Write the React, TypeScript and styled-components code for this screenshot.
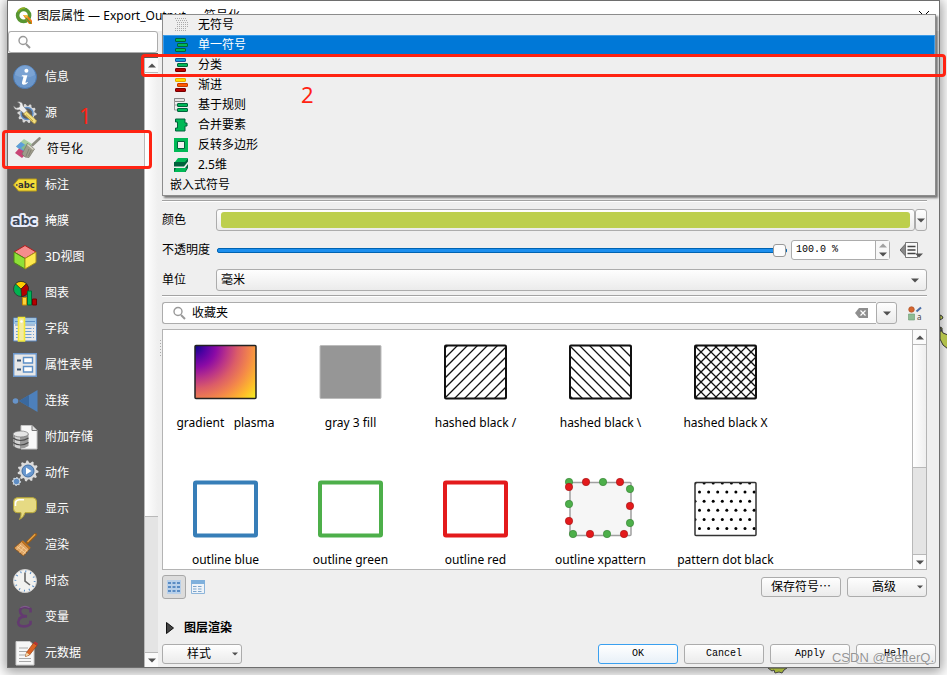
import React from "react";
import styled, { createGlobalStyle, css } from "styled-components";

const UI = `"Noto Sans", "Noto Sans CJK SC", sans-serif`;
const MONO = `"Liberation Mono", "Noto Sans CJK SC", monospace`;

const GlobalStyle = createGlobalStyle`
  * { box-sizing: border-box; }
  body { margin: 0; background: #fff; overflow: hidden; }
  button, input, select { font: inherit; color: inherit; margin: 0; }
  svg { display: block; flex: none; }
`;

const raised = css`
  border: 1px solid #acacac;
  border-radius: 3px;
  background: linear-gradient(#fefefe, #ebebeb);
`;

const Desktop = styled.div`
  position: relative;
  height: 100vh;
  padding: 0 7px 7px;
  overflow: hidden;
  font: 12px/20px ${UI};
  color: #000;
`;

const Dialog = styled.main`
  position: relative;
  display: flex;
  flex-direction: column;
  height: 100%;
  border: 1px solid #6e6e6e;
  background: #efefef;
  box-shadow: 0 2px 12px 2px rgba(0, 0, 0, 0.4);
`;

const TitleBar = styled.header`
  display: flex;
  align-items: center;
  gap: 4px;
  height: 30px;
  padding: 0 10px 0 7px;
  background: #fff;
`;

const Title = styled.h1`
  flex: 1;
  margin: 0;
  font-size: 12px;
  font-weight: 400;
`;

const CloseButton = styled.button`
  padding: 0;
  border: 0;
  background: none;
`;

const Body = styled.div`
  display: flex;
  flex: 1;
  gap: 4px;
  min-height: 0;
`;

const Sidebar = styled.aside`
  display: flex;
  flex-direction: column;
  width: 150px;
  min-height: 0;
`;

const SideSearch = styled.label`
  display: flex;
  align-items: center;
  flex: none;
  height: 22px;
  padding: 0 8px;
  gap: 6px;
  border: 1px solid #acacac;
  border-radius: 3px;
  background: #fff;
`;

const BareInput = styled.input`
  flex: 1;
  min-width: 0;
  padding: 0;
  border: 0;
  outline: 0;
  background: none;
`;

const SideBody = styled.div`
  display: flex;
  flex: 1;
  min-height: 0;
  background: #5c5c5c;
`;

const NavList = styled.nav`
  flex: 1;
  padding-top: 6px;
  overflow: hidden;
`;

const NavItem = styled.button<{ $active?: boolean }>`
  display: flex;
  align-items: center;
  gap: 8px;
  width: 100%;
  height: 36px;
  padding: 0 0 0 ${(p) => (p.$active ? 7 : 5)}px;
  border: 0;
  background: ${(p) => (p.$active ? "#efefef" : "transparent")};
  color: ${(p) => (p.$active ? "#000" : "#fff")};
  text-align: left;
`;

const Scroll = styled.div<{ $offset?: number }>`
  display: flex;
  flex-direction: column;
  flex: none;
  width: 14px;
  margin-top: ${(p) => p.$offset ?? 0}px;
  border-left: 1px solid #b8b8b8;
  background: #e4e4e4;
`;

const ScrollButton = styled.button`
  display: flex;
  align-items: center;
  justify-content: center;
  flex: none;
  height: 14px;
  padding: 0;
  border: 0;
  background: #fbfbfb;
`;

const ScrollThumb = styled.div<{ $size: number }>`
  flex: 0 0 ${(p) => p.$size}%;
  border: solid #b8b8b8;
  border-width: 1px 0;
  background: linear-gradient(90deg, #fff, #efefef);
`;

const ScrollGap = styled.div`
  flex: 1;
  border-bottom: 1px solid #b8b8b8;
`;

const Panel = styled.section`
  position: relative;
  display: flex;
  flex-direction: column;
  flex: 1;
  min-width: 0;
  padding: 0 3px 3px 0;
`;

const Upper = styled.div`
  display: flex;
  flex-direction: column;
  flex: 1;
  min-height: 0;
  margin-right: 9px;
`;

const LayerTree = styled.div`
  flex: none;
  height: 169px;
`;

const Rule = styled.hr`
  flex: none;
  width: 100%;
  height: 2px;
  margin: 0;
  border: 0;
  border-top: 1px solid #a3a3a3;
  background: #fff;
`;

const Form = styled.div`
  display: grid;
  grid-template-columns: 54px 1fr;
  row-gap: 8px;
  align-items: center;
  padding: 7px 0 4px;
`;

const FieldLabel = styled.label`
  white-space: nowrap;
`;

const Line = styled.div`
  display: flex;
  align-items: center;
  height: 22px;
  min-width: 0;
`;

const ColorButton = styled.button`
  ${raised}
  flex: 1;
  height: 22px;
  padding: 2px 4px;
`;

const Swatch = styled.span`
  display: block;
  height: 16px;
  border-radius: 3px;
  background: #bdcf4d;
`;

const ArrowButton = styled.button<{ $wide?: boolean }>`
  ${raised}
  display: flex;
  align-items: center;
  justify-content: center;
  width: ${(p) => (p.$wide ? 21 : 12)}px;
  height: 22px;
  padding: 0;
`;

const Slider = styled.input`
  flex: 1;
  min-width: 0;
  height: 14px;
  && { margin: 0 4px 0 1px; }
  appearance: none;
  background: none;
  &::-webkit-slider-runnable-track {
    height: 5px;
    border: 1px solid #0063b1;
    border-radius: 2px;
    background: #1c8fee;
  }
  &::-webkit-slider-thumb {
    appearance: none;
    width: 13px;
    height: 13px;
    margin-top: -5px;
    border: 1px solid #999;
    border-radius: 3px;
    background: #fcfcfc;
  }
`;

const Spin = styled.div`
  display: flex;
  width: 99px;
  height: 20px;
  padding-left: 4px;
  border: 1px solid #acacac;
  border-radius: 3px;
  background: #fff;
  font: 10px/18px ${MONO};
`;

const SpinArrows = styled.div`
  display: flex;
  flex-direction: column;
  width: 14px;
  border-left: 1px solid #acacac;
  background: #f7f7f7;
`;

const SpinArrow = styled.button`
  display: flex;
  align-items: center;
  justify-content: center;
  flex: 1;
  padding: 0;
  border: 0;
  background: none;
`;

const IconButton = styled.button`
  && { margin: 0 4px 0 10px; }
  padding: 0;
  border: 0;
  background: none;
`;

const SelectWrap = styled.div`
  ${raised}
  display: grid;
  align-items: center;
  height: 22px;
  > * { grid-area: 1 / 1; }
  > svg { justify-self: end; margin-right: 7px; pointer-events: none; }
`;

const Select = styled.select`
  width: 100%;
  height: 20px;
  padding: 0 4px;
  border: 0;
  outline: 0;
  appearance: none;
  background: none;
`;

const Search = styled.div`
  display: flex;
  align-items: center;
  flex: 1;
  height: 22px;
  gap: 6px;
  padding: 0 8px 0 9px;
  border: 1px solid #acacac;
  border-right: 0;
  border-radius: 3px 0 0 3px;
  background: #fff;
`;

const SearchLine = styled(Line)`
  flex: none;
  margin: 5px 0;
`;

const SymbolFrame = styled.div`
  display: flex;
  flex: 1;
  min-height: 0;
  border: 1px solid #b4b4b4;
  background: #fff;
`;

const SymbolGrid = styled.div`
  display: grid;
  grid-template-columns: repeat(auto-fill, 125px);
  grid-auto-rows: 137px;
  flex: 1;
  overflow: hidden;
`;

const SymbolItem = styled.button`
  display: flex;
  flex-direction: column;
  align-items: center;
  gap: 8px;
  padding: 8px 0 0;
  border: 0;
  background: none;
  white-space: pre;
`;

const ViewLine = styled.div`
  display: flex;
  align-items: center;
  flex: none;
  height: 24px;
  margin: 5px 0 19px;
`;

const ViewButton = styled.button<{ $active?: boolean }>`
  display: flex;
  align-items: center;
  justify-content: center;
  width: 24px;
  height: 24px;
  padding: 0;
  border: 1px solid ${(p) => (p.$active ? "#a8a8a8" : "transparent")};
  border-radius: 3px;
  background: ${(p) => (p.$active ? "#dcdcdc" : "none")};
`;

const Spacer = styled.span`
  flex: 1;
`;

const PushButton = styled.button<{ $default?: boolean; $mono?: boolean }>`
  ${raised}
  display: flex;
  align-items: center;
  justify-content: center;
  width: 80px;
  height: 20px;
  padding: 0 3px;
  line-height: 18px;
  ${(p) => p.$mono && css`&& { font: 10px/18px ${MONO}; }`}
  ${(p) => p.$default && css`border-color: #3aa0f0; background: linear-gradient(#fff, #e8f0f8);`}
`;

const ButtonText = styled.span`
  flex: 1;
  text-align: center;
`;

const ButtonGroup = styled.div`
  display: flex;
  gap: 6px;
`;

const Collapsible = styled.button`
  display: flex;
  align-items: center;
  align-self: flex-start;
  gap: 10px;
  height: 20px;
  padding: 0 4px;
  border: 0;
  background: none;
  && { font-weight: 700; }
`;

const Footer = styled.footer`
  display: flex;
  justify-content: space-between;
  margin-top: 6px;
`;

const Popup = styled.ul`
  position: absolute;
  z-index: 2;
  top: 13px;
  left: 154px;
  right: 3px;
  margin: 0;
  padding: 0;
  border: 1px solid #8c8c8c;
  background: #efefef;
  box-shadow: 2px 2px 2px rgba(0, 0, 0, 0.5);
  list-style: none;
`;

const Option = styled.li<{ $selected?: boolean; $plain?: boolean }>`
  display: flex;
  align-items: center;
  gap: 10px;
  height: 20px;
  padding-left: ${(p) => (p.$plain ? 7 : 11)}px;
  color: ${(p) => (p.$selected ? "#fff" : "#000")};
  ${(p) => p.$selected && css`background: #0078d7; box-shadow: inset 0 0 0 1px #3c9be8;`}
`;

const Mark = styled.div<{ $kind: "nav" | "option" }>`
  position: absolute;
  z-index: 3;
  border: 3px solid #ff2312;
  border-radius: 4px;
  pointer-events: none;
  ${(p) =>
    p.$kind === "nav"
      ? css`top: 130px; left: 2px; width: 150px; height: 39px;`
      : css`top: 54px; left: 141px; right: 1px; height: 23px;`}
`;

const Numeral = styled.span<{ $x: number; $y: number }>`
  position: absolute;
  z-index: 3;
  top: ${(p) => p.$y}px;
  left: ${(p) => p.$x}px;
  color: #ff2312;
  font-size: 22px;
  line-height: 24px;
`;

const Watermark = styled.span`
  position: absolute;
  z-index: 3;
  right: 13px;
  bottom: 7px;
  color: rgba(120, 120, 120, 0.8);
  font: 13px/20px "Liberation Sans", sans-serif;
  text-shadow: 0 0 1px #fff;
`;

const MapPiece = styled.svg<{ $side: "right" | "bottom" }>`
  position: absolute;
  z-index: 1;
  ${(p) => (p.$side === "right" ? css`top: 290px; right: 0;` : css`bottom: 1px; left: 767px;`)}
`;

const Grip = styled.svg`
  position: absolute;
  top: 309px;
  left: -3px;
`;

const Down = ({ up, small, light }: { up?: boolean; small?: boolean; light?: boolean }) => (
  <svg width={small ? 6 : 8} height={small ? 4 : 5} viewBox="0 0 8 5">
    <path d={up ? "M0 4.5 4 .5 8 4.5z" : "M0 .5h8L4 4.5z"} fill={light ? "#a0a0a0" : "#505050"} />
  </svg>
);

const Magnifier = () => (
  <svg width="14" height="14" viewBox="0 0 14 14" fill="none" stroke="#999">
    <circle cx="6" cy="5.5" r="4" strokeWidth="1.4" />
    <path d="m9 9 4 4" strokeWidth="2" />
  </svg>
);

const Logo = () => (
  <svg width="18" height="18" viewBox="0 0 18 18">
    <circle cx="8.6" cy="8.4" r="6" fill="none" stroke="#589632" strokeWidth="3.6" />
    <path d="M3 4.5A7.5 7.5 0 0 1 10 1" fill="none" stroke="#93b023" strokeWidth="1.5" />
    <path d="M8 8h4l5 5.5V17h-3z" fill="#ee7913" />
    <path d="M8 8h4.5v4z" fill="#f0c040" />
    <path d="m11 11 5 5.5" stroke="#589632" strokeWidth="1.2" />
  </svg>
);

const gear = (cx: number, cy: number, r: number, teeth: number) => {
  const pts: string[] = [];
  for (let i = 0; i < teeth * 4; i++) {
    const a = (i / (teeth * 4)) * Math.PI * 2;
    const q = i % 4 < 2 ? r : r * 0.8;
    pts.push(`${(cx + q * Math.cos(a)).toFixed(2)},${(cy + q * Math.sin(a)).toFixed(2)}`);
  }
  return pts.join(" ");
};

const navIcons: Record<string, React.ReactNode> = {
  info: (
    <>
      <circle cx="12" cy="12" r="11.5" fill="#6b97cb" stroke="#4b78b0" />
      <path d="M2 10a10 10 0 0 1 20 0q-10 5-20 0z" fill="#86acd9" opacity=".6" />
      <circle cx="13.4" cy="5.8" r="2" fill="#fff" />
      <path d="M9 10.2h5.4l-2 7.3q.8.6 2-.6l.6.6q-2 2.6-4.6 2.3-2-.4-1.4-2.6l1.5-5.4q-.6-.6-1.8-.4z" fill="#fff" />
    </>
  ),
  source: (
    <>
      <polygon points={gear(14, 12.5, 9.6, 10)} fill="#d8d8d8" />
      <circle cx="14" cy="12.5" r="6" fill="#5c5c5c" stroke="#5f8fc8" strokeWidth="1.4" />
      <path d="M.5 5 3.500 7l3-1L7 3 4.400 1q5-1 5.800 4l4.300 5-3 3-5-4.200Q1.600 9.800.5 5z" fill="#eee" stroke="#777" strokeWidth=".6" />
      <path d="m10.500 13 3-2.800 9.700 9q.8 2.500-2 3.500z" fill="#f3df82" stroke="#a88d2d" strokeWidth=".7" />
      <path d="m13 13.500 7 6.500" stroke="#c9ac3d" />
    </>
  ),
  symbology: (
    <>
      <path d="M1 9.500 9 2l8 5-7 8z" fill="#a9cfa0" />
      <path d="m1 9.500 5-4.500 6 4-4 6z" fill="#5c9edb" />
      <path d="m0 16 4-4.500 8 4.500-5 5z" fill="#c84575" />
      <path d="m6 11 6-5 4 3-5 6z" fill="#8ec07e" opacity=".8" />
      <path d="m17.500 8 7-6.500" stroke="#8b8b80" strokeWidth="2.6" strokeLinecap="round" />
      <path d="m12.500 6.500 7 5.500-5.500 8.500-4-.5L7 17z" fill="#9e9c8b" stroke="#77766a" strokeWidth=".7" />
      <path d="m12.500 7.500 6 5" stroke="#dad8ca" strokeWidth="1.3" />
      <path d="m14 12-3 7m5-6-2.500 6" stroke="#77766a" strokeWidth=".7" />
    </>
  ),
  label: (
    <>
      <path d="M5.500 6H23.500v12H5.500L.5 12z" fill="#f4dd3a" stroke="#b89a18" />
      <circle cx="3.800" cy="12" r="1" fill="#5c5c5c" />
      <text x="5" y="15" fontFamily="DejaVu Sans" fontWeight="700" fontSize="8.5" fill="#333">abc</text>
    </>
  ),
  mask: (
    <text x="-1" y="16" fontFamily="DejaVu Sans" fontWeight="700" fontSize="12.5" fill="#3e4757" stroke="#e9edfb" strokeWidth="4" strokeLinejoin="round" paintOrder="stroke">abc</text>
  ),
  cube: (
    <>
      <path d="M12 .5 23 7l-11 6.500L1 7z" fill="#f58d8d" stroke="#b01c1c" />
      <path d="m1 7 11 6.500V24L1 17.500z" fill="#8fe038" stroke="#4d8a16" />
      <path d="m23 7-11 6.500V24l11-6.500z" fill="#fde94e" stroke="#a8921b" />
    </>
  ),
  chart: (
    <>
      <circle cx="8" cy="8" r="7.5" fill="#00b250" stroke="#333" strokeWidth=".8" />
      <path d="M8 8 2.500 2.800A7.500 7.500 0 0 1 13.500 2.800z" fill="#fc0" stroke="#222" strokeWidth=".7" />
      <path d="m8 8 5.500-5.200A7.500 7.500 0 0 1 8.500 15.500z" fill="#b40000" stroke="#222" strokeWidth=".7" />
      <path d="M9.500 16.500h4v7.500h-4z" fill="#fcd43a" stroke="#c98a00" />
      <path d="M14.500 10h4v14h-4z" fill="#00b558" stroke="#006a38" />
      <path d="M19.500 18h4v6h-4z" fill="#b40000" stroke="#700" />
    </>
  ),
  fields: (
    <>
      <path d="M.5 1h23v23H.5z" fill="#e9e9e9" stroke="#5a85bb" />
      <path d="M1 1.500h22V7H1z" fill="#9fc6e4" />
      <path d="M2 4.500h20M2 8h20" stroke="#5c8fc6" />
      <path d="M3 11.500h18M3 14.500h18M3 17.500h18M3 20.500h18" stroke="#6f9fd3" strokeDasharray="7 1.500" />
      <path d="M5.500.5h6V24h-6z" fill="#f3eba0" stroke="#f4e834" strokeWidth="1.6" />
      <circle cx="8.500" cy="4.500" r="1.3" fill="#fff" />
    </>
  ),
  form: (
    <>
      <path d="M.7.7h22.600v22.600H.7z" fill="#e8e8e8" stroke="#6c97cb" strokeWidth="1.4" />
      <path d="M4 7.500h4M4 16.500h4" stroke="#3d556f" strokeWidth="2" />
      <path d="M10.500 4.500h9v5.500h-9zM10.500 13.500h9v5.500h-9z" fill="#fff" stroke="#5c8fc6" strokeWidth="1.4" />
    </>
  ),
  join: (
    <>
      <circle cx="2.500" cy="12" r="2.8" fill="#6794ca" />
      <path d="M6 12 24.500 1v22z" fill="#4d80bb" />
      <path d="M6 12 16 6v12z" fill="#3a699f" />
    </>
  ),
  storage: (
    <>
      <path d="M8 .5h11l5 5V24H8z" fill="#f8f8f8" stroke="#c4c4c4" />
      <path d="M19 .5v5h5" fill="#ddd" stroke="#777" />
      <path d="M0 9v12q7.500 5 15.500 0V9z" fill="#999" />
      <path d="M2 9v13q3 1.500 5 1.500V10z" fill="#d2d2d2" />
      <ellipse cx="7.700" cy="9" rx="7.7" ry="3" fill="#e5e5e5" stroke="#777" strokeWidth=".7" />
      <path d="M0 13q7.500 5 15.500 0M0 17.500q7.500 5 15.500 0" fill="none" stroke="#4c4c4c" strokeWidth="1.2" />
    </>
  ),
  actions: (
    <>
      <polygon points={gear(15, 10, 10.5, 11)} fill="#dcdcdc" />
      <circle cx="15" cy="10" r="6" fill="#6998cf" stroke="#416fa5" />
      <path d="M13 6.500v7l5.500-3.500z" fill="#fff" />
      <polygon points={gear(3.5, 20.5, 4.6, 8)} fill="#c9d3dc" />
      <circle cx="3.500" cy="20.500" r="2.7" fill="#5e8dc4" />
    </>
  ),
  display: (
    <>
      <path d="M4 .7h16q3.500.3 3.500 4v7q-.3 3.800-4 4H12q-.7 4.300-5.500 6.800 2-3.500 1.500-6.800H4q-3.500-.3-3.500-4v-7Q.7 1 4 .7z" fill="#e6da83" stroke="#b5a536" />
      <path d="M2.500 9V6q.3-3 3.500-3.300h5" fill="none" stroke="#fff" strokeWidth="1.5" />
    </>
  ),
  render: (
    <>
      <path d="m14.500 9.500 8-8" stroke="#9c5c14" strokeWidth="3" strokeLinecap="round" />
      <path d="m14.500 9 7.700-7.700" stroke="#e9a445" strokeWidth="1.3" />
      <path d="m8.500 8.500 8 7.500-6 7L1 15z" fill="#e0a463" stroke="#8d5110" strokeWidth=".8" />
      <path d="m9 8 8 7.500" stroke="#c07420" strokeWidth="2.2" />
      <path d="m4 13.500 9 7M6.500 11.500l8 6.500M8 12l-4.500 5m7.500-3-4.500 5.500m7.500-3-4 5" stroke="#fad9a3" strokeWidth=".7" />
    </>
  ),
  clock: (
    <>
      <circle cx="12" cy="12" r="11.5" fill="#f2f2f0" stroke="#d0d0d0" />
      <circle cx="12" cy="12" r="9.6" fill="none" stroke="#4d86c4" strokeWidth="1.8" strokeDasharray="1 4.030" />
      <path d="M12 3.500V12l5 4" fill="none" stroke="#666" strokeWidth="1.6" />
    </>
  ),
  epsilon: (
    <>
      <path d="M17.500 7.500V4Q14 1.500 9.500 2.500q-5 3 0 8 1.500.8 4.500.8M14 11.500q-5-.5-7.500 2-3.500 7 3 7.800 5 .5 8-2.500v-3" fill="none" stroke="#633a70" strokeWidth="2.6" />
      <path d="M16.500 2.500Q12 0 7.500 2.500" fill="none" stroke="#8d6a99" strokeWidth=".8" />
    </>
  ),
  metadata: (
    <>
      <path d="M3 .5h14l4 4V24H3z" fill="#f7f7f7" stroke="#ccc" />
      <path d="M6 7h9M6 10.500h8M6 14h10M6 17.500h12M6 20.500h12" stroke="#a9a9a9" />
      <path d="m12.500 15.500 1-4L20.500 2l3.500 2.500-7.500 9.500z" fill="#dc6425" stroke="#973d0d" strokeWidth=".7" />
      <path d="m20.500 2 1.500-1.500 3 2L24 4.500z" fill="#b33" />
      <path d="m12.500 15.500 1-4 3 2.300z" fill="#f4d9a6" />
    </>
  ),
};

const bar = (x: number, y: number, fill: string, stroke: string) => (
  <rect x={x} y={y} width="10" height="3" rx=".5" fill={fill} stroke={stroke} />
);
const G = "#00b956";
const D = "#00623c";

const optionIcons: Record<string, React.ReactNode> = {
  none: (
    <g fill="none" stroke="#aaa" strokeDasharray="1 1">
      <path d="M1 .5h11M2 2.500h11M3 4.500h11M3 6.500h11M3 8.500h11M1 10.500h11M1 12.500h11" />
    </g>
  ),
  single: <>{bar(1.5, 0.5, G, D)}{bar(3.5, 5.5, G, D)}{bar(1.5, 10.5, G, D)}</>,
  categorized: <>{bar(1.5, 0.5, "#169fd6", "#1750a0")}{bar(3.5, 5.5, G, D)}{bar(1.5, 10.5, "#b80000", "#780000")}</>,
  graduated: <>{bar(1.5, 0.5, "#ffe000", "#e8a800")}{bar(3.5, 5.5, "#ff5a00", "#c43c00")}{bar(1.5, 10.5, "#b80000", "#780000")}</>,
  rules: (
    <>
      <path d="M.5 0v12M.5 7H3M.5 12H3" stroke="#999" fill="none" />
      {bar(0.5, 0.5, "#e4e4e4", "#888")}{bar(3.5, 5.5, G, D)}{bar(3.5, 10.5, G, D)}
    </>
  ),
  merged: <path d="M1.500 1h9.500v4h2v3h-2v5H1.500v-3h2V4h-2z" fill={G} stroke={D} />,
  inverted: (
    <>
      <path d="M0 0h14v14H0z" fill={G} />
      <path d="M3.500 3.500h7v7h-7z" fill="#efefef" stroke={D} />
    </>
  ),
  extruded: (
    <>
      <path d="M0 4h10l4-4v3.500L10 8.500H0z" fill={D} />
      <path d="M4 0h10l-3 4H1z" fill={G} />
      <path d="M0 10h11l3-4v4l-3 5H0z" fill={D} />
      <path d="M2 10h11l-2 4H0z" fill={G} />
    </>
  ),
};

const nav: [string, string][] = [
  ["info", "信息"], ["source", "源"], ["symbology", "符号化"], ["label", "标注"], ["mask", "掩膜"],
  ["cube", "3D视图"], ["chart", "图表"], ["fields", "字段"], ["form", "属性表单"], ["join", "连接"],
  ["storage", "附加存储"], ["actions", "动作"], ["display", "显示"], ["render", "渲染"],
  ["clock", "时态"], ["epsilon", "变量"], ["metadata", "元数据"],
];

const options: [string, string][] = [
  ["none", "无符号"], ["single", "单一符号"], ["categorized", "分类"], ["graduated", "渐进"],
  ["rules", "基于规则"], ["merged", "合并要素"], ["inverted", "反转多边形"], ["extruded", "2.5维"],
];

const hatch = (back: boolean, key: string) => {
  const lines: string[] = [];
  for (let x = -55; x < 130; x += 10) lines.push(back ? `M${x} 6l56 56` : `M${x} 62l56-56`);
  return <path key={key} d={lines.join("")} stroke="#111" strokeWidth="1.3" clipPath="url(#box)" />;
};

const frame = (fill: string, stroke: string, w: number) => (
  <rect x="7" y="7.500" width="61" height="53" rx="1" fill={fill} stroke={stroke} strokeWidth={w} />
);

const dots = () => {
  const out: React.ReactNode[] = [];
  for (let r = 0; r < 6; r++)
    for (let c = 0; c < 8; c++)
      out.push(<circle key={`${r}-${c}`} cx={(r % 2 ? 11.5 : 7) + c * 9.1} cy={8 + r * 9.1} r="1.5" clipPath="url(#box)" />);
  return out;
};

const markers: [number, number, number][] = [
  [6, 7, 0], [6, 12, 1], [23, 7, 1], [40, 7, 0], [57, 7, 1], [67, 14, 0], [67, 31, 1], [67, 48, 0],
  [6, 29, 0], [6, 46, 1], [10, 59, 0], [27, 59, 1], [44, 59, 0], [61, 59, 1],
];

const symbols: [string, React.ReactNode][] = [
  ["gradient   plasma", (
    <>
      <defs>
        <radialGradient id="plasma" gradientUnits="userSpaceOnUse" cx="7" cy="8" r="82">
          <stop offset="0" stopColor="#0d0887" />
          <stop offset=".13" stopColor="#5302a3" />
          <stop offset=".26" stopColor="#8b0aa5" />
          <stop offset=".39" stopColor="#b83289" />
          <stop offset=".52" stopColor="#db5c68" />
          <stop offset=".68" stopColor="#f48849" />
          <stop offset=".84" stopColor="#febd2a" />
          <stop offset="1" stopColor="#f0f921" />
        </radialGradient>
        <clipPath id="box"><path d="M7 8h61v52H7z" /></clipPath>
      </defs>
      {frame("url(#plasma)", "#222", 1.5)}
    </>
  )],
  ["gray 3 fill", frame("#969696", "#bcbcbc", 1)],
  ["hashed black /", <>{hatch(false, "a")}{frame("none", "#111", 2)}</>],
  ["hashed black \\", <>{hatch(true, "a")}{frame("none", "#111", 2)}</>],
  ["hashed black X", <>{hatch(false, "a")}{hatch(true, "b")}{frame("none", "#111", 2)}</>],
  ["outline blue", frame("none", "#377eb8", 4)],
  ["outline green", frame("none", "#4daf4a", 4)],
  ["outline red", frame("none", "#e31a1c", 4)],
  ["outline xpattern", (
    <>
      {frame("#f6f6f6", "#a0a0a0", 1.5)}
      {markers.map(([x, y, red]) => (
        <circle key={`${x}-${y}`} cx={x} cy={y} r="3.7" fill={red ? "#e31a1c" : "#4daf4a"} stroke={red ? "#a01010" : "#348032"} strokeWidth=".6" />
      ))}
    </>
  )],
  ["pattern dot black", <>{dots()}{frame("none", "#333", 1.5)}</>],
];

export default function App() {
  return (
    <>
      <GlobalStyle />
      <Desktop>
        <Dialog>
          <TitleBar>
            <Logo />
            <Title>图层属性 — Export_Output — 符号化</Title>
            <CloseButton aria-label="关闭">
              <svg width="10" height="10" viewBox="0 0 10 10" stroke="#000"><path d="m0 0 10 10M10 0 0 10" /></svg>
            </CloseButton>
          </TitleBar>
          <Body>
            <Sidebar>
              <SideSearch>
                <Magnifier />
                <BareInput aria-label="搜索" />
              </SideSearch>
              <SideBody>
                <NavList>
                  {nav.map(([icon, text]) => (
                    <NavItem key={icon} $active={icon === "symbology"}>
                      <svg width="24" height="24" viewBox="0 0 24 24" overflow="visible">{navIcons[icon]}</svg>
                      {text}
                    </NavItem>
                  ))}
                </NavList>
                <Scroll $offset={5}>
                  <ScrollButton aria-label="向上"><Down up /></ScrollButton>
                  <ScrollThumb $size={73} />
                  <ScrollGap />
                  <ScrollButton aria-label="向下"><Down /></ScrollButton>
                </Scroll>
              </SideBody>
            </Sidebar>
            <Panel>
              <Grip width="3" height="18" viewBox="0 0 3 18">
                <path d="M1.500 0v18" stroke="#aaa" strokeDasharray="1 2" />
              </Grip>
              <Upper>
                <LayerTree />
                <Rule />
                <Form>
                  <FieldLabel htmlFor="color">颜色</FieldLabel>
                  <Line>
                    <ColorButton id="color"><Swatch /></ColorButton>
                    <ArrowButton aria-label="颜色选项"><Down /></ArrowButton>
                  </Line>
                  <FieldLabel htmlFor="opacity">不透明度</FieldLabel>
                  <Line>
                    <Slider id="opacity" type="range" min={0} max={100} defaultValue={100} />
                    <Spin>
                      <BareInput aria-label="不透明度数值" defaultValue="100.0 %" />
                      <SpinArrows>
                        <SpinArrow aria-label="增加"><Down up light /></SpinArrow>
                        <SpinArrow aria-label="减少"><Down /></SpinArrow>
                      </SpinArrows>
                    </Spin>
                    <IconButton aria-label="数据定义覆盖">
                      <svg width="23" height="18" viewBox="0 0 23 18">
                        <path d="M5.500 3v12L0 9z" fill="#888" stroke="#666" />
                        <path d="M5.500 1.500h12v15h-12z" fill="#fafafa" stroke="#777" />
                        <path d="M7.500 5.500h8M7.500 9h8M7.500 12.500h8" stroke="#444" strokeWidth="1.3" />
                        <path d="M15 12.500h8l-4 4z" fill="#555" />
                      </svg>
                    </IconButton>
                  </Line>
                  <FieldLabel htmlFor="unit">单位</FieldLabel>
                  <SelectWrap>
                    <Select id="unit" defaultValue="mm"><option value="mm">毫米</option></Select>
                    <Down />
                  </SelectWrap>
                </Form>
                <Rule />
                <SearchLine>
                  <Search>
                    <Magnifier />
                    <BareInput aria-label="符号搜索" defaultValue="收藏夹" />
                    <svg width="13" height="10" viewBox="0 0 13 10">
                      <path d="M4 0h9v10H4L0 5z" fill="#8f8f8f" />
                      <path d="m5.500 2.500 5 5m0-5-5 5" stroke="#fff" strokeWidth="1.2" />
                    </svg>
                  </Search>
                  <ArrowButton $wide aria-label="符号组"><Down /></ArrowButton>
                  <IconButton aria-label="样式管理器">
                    <svg width="16" height="16" viewBox="0 0 16 16">
                      <circle cx="4.500" cy="4.500" r="2.8" fill="#d4652f" stroke="#a84a1c" strokeWidth=".6" />
                      <path d="m9.500 6.500 4.500-4" stroke="#4a6fa8" strokeWidth="2" />
                      <path d="M1.500 9h6v6h-6z" fill="#8ebc94" stroke="#6b9a72" strokeWidth=".6" />
                      <text x="10" y="14.500" fontFamily="Noto Sans" fontSize="8" fill="#444">a</text>
                    </svg>
                  </IconButton>
                </SearchLine>
                <SymbolFrame>
                  <SymbolGrid>
                    {symbols.map(([name, art]) => (
                      <SymbolItem key={name}>
                        <svg width="75" height="67" viewBox="0 0 75 67">{art}</svg>
                        {name}
                      </SymbolItem>
                    ))}
                  </SymbolGrid>
                  <Scroll>
                    <ScrollButton aria-label="向上"><Down up /></ScrollButton>
                    <ScrollThumb $size={52} />
                    <ScrollGap />
                    <ScrollButton aria-label="向下"><Down /></ScrollButton>
                  </Scroll>
                </SymbolFrame>
                <ViewLine>
                  <ViewButton $active aria-label="图标视图">
                    <svg width="14" height="14" viewBox="0 0 14 14">
                      <path d="M0 0h14v14H0z" fill="#b8d0ea" />
                      <path d="M1 3h12M1 7h12M1 11h12" stroke="#5a8cc4" strokeWidth="2" strokeDasharray="3 1.500" />
                    </svg>
                  </ViewButton>
                  <ViewButton aria-label="列表视图">
                    <svg width="14" height="14" viewBox="0 0 14 14">
                      <path d="M.5.5h13v13H.5z" fill="#eef3f8" stroke="#8db5da" />
                      <path d="M0 0h14v4H0z" fill="#7fb0dc" />
                      <path d="M2 6.500h10M2 9h10M2 11.500h10" stroke="#7da5cc" strokeDasharray="3.500 1.500" />
                    </svg>
                  </ViewButton>
                  <Spacer />
                  <ButtonGroup>
                    <PushButton>保存符号⋯</PushButton>
                    <PushButton><ButtonText>高级</ButtonText><Down small /></PushButton>
                  </ButtonGroup>
                </ViewLine>
              </Upper>
              <Collapsible aria-expanded={false}>
                <svg width="8" height="12" viewBox="0 0 8 12"><path d="M.5.5v11l7-5.500z" fill="#444" stroke="#111" /></svg>
                图层渲染
              </Collapsible>
              <Footer>
                <PushButton><ButtonText>样式</ButtonText><Down small /></PushButton>
                <ButtonGroup>
                  <PushButton $mono $default>OK</PushButton>
                  <PushButton $mono>Cancel</PushButton>
                  <PushButton $mono>Apply</PushButton>
                  <PushButton $mono>Help</PushButton>
                </ButtonGroup>
              </Footer>
            </Panel>
          </Body>
          <Popup role="listbox" aria-label="符号类型">
            {options.map(([icon, text]) => (
              <Option key={icon} role="option" aria-selected={icon === "single"} $selected={icon === "single"}>
                <svg width="14" height="14" viewBox="0 0 14 14">{optionIcons[icon]}</svg>
                {text}
              </Option>
            ))}
            <Option role="option" aria-selected={false} $plain>嵌入式符号</Option>
          </Popup>
        </Dialog>
        <MapPiece $side="right" width="7" height="60" viewBox="0 0 7 60">
          <path d="M0 25l2 1 1 2-3 2zM0 37l2 1v3H0zM0 49l3 6 5 4V45l-5-2-3-6z" fill="#b1bf4a" stroke="#333" />
        </MapPiece>
        <MapPiece $side="bottom" width="22" height="6" viewBox="0 0 22 6">
          <path d="M1 0l4 3 2-1 1 3 4-1 3 1 2-3 3-2z" fill="#a3b23c" stroke="#444" />
        </MapPiece>
        <Mark $kind="nav" />
        <Mark $kind="option" />
        <Numeral $x={79} $y={103}>1</Numeral>
        <Numeral $x={301} $y={82}>2</Numeral>
        <Watermark>CSDN @BetterQ.</Watermark>
      </Desktop>
    </>
  );
}
